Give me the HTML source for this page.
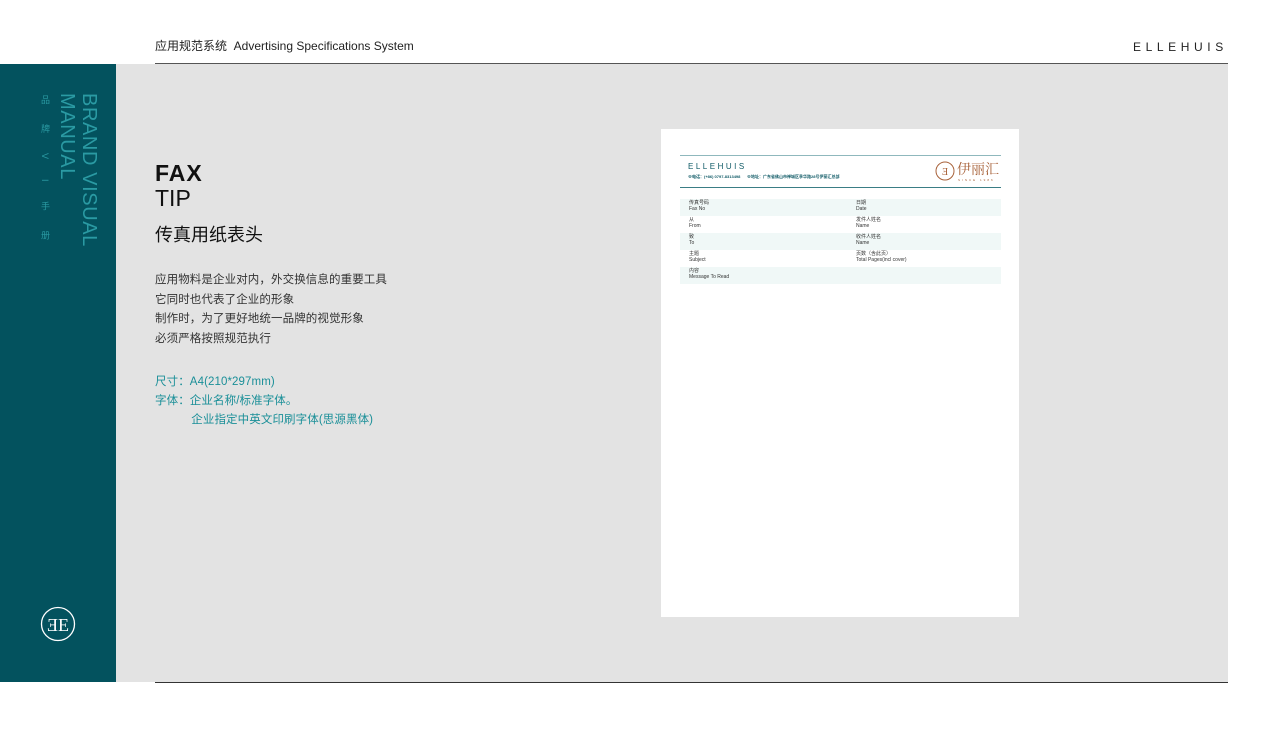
<!DOCTYPE html>
<html><head><meta charset="utf-8"><style>
*{margin:0;padding:0;box-sizing:border-box}
body{width:1280px;height:743px;background:#fff;position:relative;overflow:hidden;font-family:"Liberation Sans","Noto Sans CJK SC",sans-serif}
.a{position:absolute}
.v{writing-mode:vertical-rl;white-space:nowrap}
</style></head><body>
<div class="a" style="left:155px;top:37px;font-size:12px;color:#222">应用规范系统&nbsp; Advertising Specifications System</div>
<div class="a" style="left:1133px;top:40px;font-size:12px;letter-spacing:4.6px;color:#222">ELLEHUIS</div>
<div class="a" style="left:155px;top:63px;width:1073px;height:1px;background:#555"></div>
<div class="a" style="left:0;top:64px;width:116px;height:618px;background:#03525e"></div>
<div class="a" style="left:116px;top:64px;width:1112px;height:618px;background:#e3e3e3"></div>
<div class="a" style="left:155px;top:682px;width:1073px;height:1px;background:#333"></div>
<div class="a v" style="left:79px;top:93px;font-size:20px;color:#2a9aa3;line-height:20px;letter-spacing:0.6px">BRAND VISUAL</div>
<div class="a v" style="left:57px;top:93px;font-size:20px;color:#2a9aa3;line-height:20px;letter-spacing:0.6px">MANUAL</div>
<div class="a v" style="left:40px;top:95px;font-size:9px;color:#2a9aa3;letter-spacing:20px;line-height:10px">品牌VI手册</div>
<svg class="a" style="left:40px;top:606px" width="36" height="36" viewBox="0 0 36 36"><circle cx="18" cy="18" r="16.5" fill="none" stroke="#fff" stroke-width="1.3"/><text x="18" y="25" text-anchor="middle" font-family="Liberation Serif,serif" font-size="18" fill="#fff">ƎE</text></svg>
<div class="a" style="left:155px;top:160px;font-size:23px;font-weight:bold;color:#111;letter-spacing:1px">FAX</div>
<div class="a" style="left:155px;top:185px;font-size:23px;color:#111">TIP</div>
<div class="a" style="left:155px;top:221px;font-size:18px;color:#111">传真用纸表头</div>
<div class="a" style="left:155px;top:271px;font-size:11.5px;line-height:19.5px;color:#333;letter-spacing:.1px">应用物料是企业对内，外交换信息的重要工具<br>它同时也代表了企业的形象<br>制作时，为了更好地统一品牌的视觉形象<br>必须严格按照规范执行</div>
<div class="a" style="left:155px;top:373px;font-size:11.5px;line-height:19px;color:#1a8f98;letter-spacing:.1px">尺寸：A4(210*297mm)<br>字体：企业名称/标准字体。<br>&nbsp;&nbsp;&nbsp;&nbsp;&nbsp;&nbsp;&nbsp;&nbsp;&nbsp;&nbsp;&nbsp;企业指定中英文印刷字体(思源黑体)</div>
<div class="a" style="left:661px;top:129px;width:358px;height:488px;background:#fff"></div>
<div class="a" style="left:680px;top:155px;width:321px;height:1px;background:#8fb8bd"></div>
<div class="a" style="left:688px;top:162px;font-size:8px;letter-spacing:2.5px;color:#0f5a66">ELLEHUIS</div>
<div class="a" style="left:688px;top:174px;font-size:4px;color:#0f5a66;font-weight:bold">⊕电话：(+86) 0797-8313498 &nbsp;&nbsp;&nbsp;&nbsp; ⊕地址：广东省佛山市禅城区季华路28号伊丽汇总部</div>
<svg class="a" style="left:935px;top:161px" width="20" height="20"><circle cx="10" cy="10" r="9" fill="none" stroke="#a8623a" stroke-width="1"/><text x="10" y="14" text-anchor="middle" font-size="10" fill="#a8623a" font-family="serif">Ǝ</text></svg>
<div class="a" style="left:957px;top:159px;font-size:14px;color:#a8623a;font-family:'Noto Serif CJK SC',serif">伊丽汇</div>
<div class="a" style="left:958px;top:178px;font-size:3px;letter-spacing:2px;color:#a8623a">SINCE 1986</div>
<div class="a" style="left:680px;top:187px;width:321px;height:1px;background:#3a7d85"></div>
<div class="a" style="left:680px;top:199px;width:321px;font-size:5px;line-height:6px;color:#333">
<div style="background:#f0f8f7;height:17px;padding:1px 9px;position:relative">传真号码<br>Fax No<span style="position:absolute;left:176px;top:1px">日期<br>Date</span></div>
<div style="height:17px;padding:1px 9px;position:relative">从<br>From<span style="position:absolute;left:176px;top:1px">发件人姓名<br>Name</span></div>
<div style="background:#f0f8f7;height:17px;padding:1px 9px;position:relative">致<br>To<span style="position:absolute;left:176px;top:1px">收件人姓名<br>Name</span></div>
<div style="height:17px;padding:1px 9px;position:relative">主题<br>Subject<span style="position:absolute;left:176px;top:1px">页数（含此页）<br>Total Pages(incl cover)</span></div>
<div style="background:#f0f8f7;height:17px;padding:1px 9px">内容<br>Message To Read</div>
</div>
</body></html>
